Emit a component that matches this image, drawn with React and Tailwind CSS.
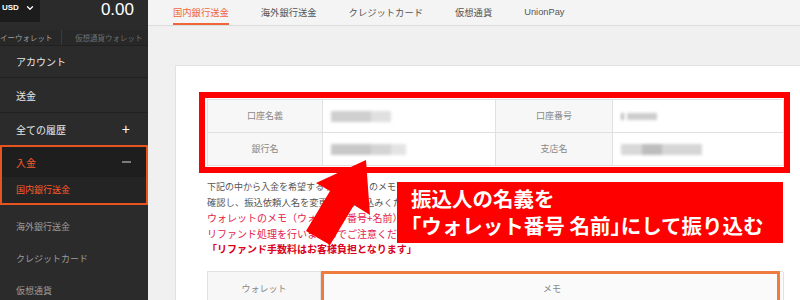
import { ChevronDown } from "lucide-react";

const jp = "font-['Noto_Sans_CJK_JP',sans-serif]";

function Sidebar() {
  return (
    <aside className="w-[148px] shrink-0 bg-[#2b2b2b] text-[#e8e8e8]">
      <div className="flex h-[30px] items-start justify-between">
        <div className="flex h-[22px] w-[40px] items-center gap-[6px] bg-[#1c1c1c] pl-[2px] pb-[6px]">
          <span className="font-['Liberation_Sans',sans-serif] text-[8px] font-bold leading-none text-white">USD</span>
          <ChevronDown size={10} strokeWidth={3} className="text-white" />
        </div>
        <span className="pr-[14px] pt-[1px] font-['Liberation_Sans',sans-serif] text-[17px] leading-none text-white">0.00</span>
      </div>
      <div className="flex h-[16px] items-center border-b border-[#202020] bg-[#282828] text-[7.5px] leading-none">
        <div className="flex h-full w-[62px] items-center border-r border-[#3a3a3a] text-[#a0a0a0]">イーウォレット</div>
        <div className="pl-[13px] text-[#6f6f6f]">仮想通貨ウォレット</div>
      </div>
      <div className="flex h-[32px] items-center border-b border-[#212121] pl-4 text-[10px]">アカウント</div>
      <div className="flex h-[35px] items-center border-b border-[#212121] pl-4 text-[10px]">送金</div>
      <div className="flex h-[32px] items-center justify-between pl-4 pr-[18px] text-[10px]">
        <span>全ての履歴</span>
        <span className="font-['Liberation_Sans',sans-serif] text-[14px] leading-none text-white">+</span>
      </div>
      <div className="h-[60px] border-2 border-[#e8541f]">
        <div className="flex h-[30px] items-center justify-between bg-[#1e1e1e] pl-[14px] pr-[15px] text-[10px] text-[#ff5a2c]">
          <span>入金</span>
          <span className="h-[1.5px] w-[9px] bg-[#7a7a7a]" />
        </div>
        <div className="flex h-[26px] items-center bg-[#242424] pl-[14px] text-[9px] text-[#ff5a2c]">国内銀行送金</div>
      </div>
      <div className="pt-[6px] text-[9px] text-[#9c9c9c]">
        <div className="flex h-[32px] items-center pl-4">海外銀行送金</div>
        <div className="flex h-[32px] items-center pl-4">クレジットカード</div>
        <div className="flex h-[32px] items-center pl-4">仮想通貨</div>
      </div>
    </aside>
  );
}

function Blur({ parts }) {
  return (
    <div className="flex blur-[1.5px]">
      {parts.map(([w, h, c], i) => (
        <div key={i} style={{ width: w, height: h, background: c }} />
      ))}
    </div>
  );
}

function Label({ children }) {
  return (
    <div className="flex h-[33px] items-center justify-center border-r border-b border-[#e0e0e0] bg-[#f7f7f7] text-[9px] text-[#888]">
      {children}
    </div>
  );
}

function Value({ children }) {
  return (
    <div className="flex h-[33px] items-center border-r border-b border-[#e0e0e0] bg-white pl-[8px]">
      {children}
    </div>
  );
}

function Main() {
  const tabs = ["海外銀行送金", "クレジットカード", "仮想通貨", "UnionPay"];
  return (
    <main className="flex-1 bg-[#f0f0f0]">
      <div className="flex h-[26px] gap-8 border-b border-[#dcdcdc] bg-[#f4f4f4] pl-[25px] text-[9.3px] text-[#555]">
        <div className="relative flex items-center text-[#f0653a]">
          国内銀行送金
          <span className="absolute bottom-0 left-0 right-0 h-[2px] bg-[#f0653a]" />
        </div>
        {tabs.map((t) => (
          <div key={t} className={`flex items-center ${t === "UnionPay" ? "font-['Liberation_Sans',sans-serif]" : ""}`}>
            {t}
          </div>
        ))}
      </div>

      <div className="pl-[27px] pt-[39px]">
        <div className="relative h-[260px] w-[640px] border border-[#e2e2e2] bg-white pl-[31px] pt-[33px]">
          <div className="relative w-[576px]">
            <div className="grid grid-cols-[115px_173px_117px_171px] border-l border-t border-[#e0e0e0]">
              <Label>口座名義</Label>
              <Value>
                <Blur parts={[[40, 11, "#cfcfcf"], [20, 11, "#e0e0e0"]]} />
              </Value>
              <Label>口座番号</Label>
              <Value>
                <Blur parts={[[3, 7, "#bbbbbb"], [3, 7, "#ffffff"], [30, 7, "#cdcdcd"]]} />
              </Value>
              <Label>銀行名</Label>
              <Value>
                <Blur parts={[[40, 11, "#c8c8c8"], [20, 11, "#d4d4d4"], [15, 11, "#e4e4e4"]]} />
              </Value>
              <Label>支店名</Label>
              <Value>
                <Blur parts={[[21, 11, "#d8d8d8"], [20, 11, "#bdbdbd"], [40, 11, "#d6d6d6"]]} />
              </Value>
            </div>
            <div className="pointer-events-none absolute -top-[7px] -right-[7px] -bottom-[7px] -left-[8px] border-[6px] border-[#ff0000]" />
          </div>

          <div className="mt-[13px] whitespace-nowrap leading-[15.5px]">
            <div className="text-[9px] text-[#555]">下記の中から入金を希望するウォレットのメモを</div>
            <div className="text-[9.3px] text-[#555]">確認し、振込依頼人名を変更の上お振込みください。</div>
            <div className="text-[10px] text-[#e5194c]">ウォレットのメモ（ウォレット番号+名前）と異なる場合、</div>
            <div className="text-[10px] text-[#e5194c]">リファンド処理を行いますのでご注意ください。</div>
            <div className="text-[10px] font-bold text-[#d8001a]">「リファンド手数料はお客様負担となります」</div>
          </div>

          <div className="relative mt-[14px] grid w-[576px] grid-cols-[113px_463px] border-l border-t border-[#e2e2e2]">
            <div className="flex h-[36px] items-center justify-center border-r border-b border-[#e2e2e2] bg-[#f7f7f7] text-[9px] text-[#888]">
              ウォレット
            </div>
            <div className="relative flex h-[36px] items-center justify-center border-r border-b border-[#e2e2e2] bg-[#fafafa] text-[9px] text-[#888]">
              メモ
              <div className="pointer-events-none absolute -top-px left-0 right-[3px] -bottom-[10px] border-[3px] border-[#ef7b3e]" />
            </div>
          </div>

          <svg className="pointer-events-none absolute left-[124px] top-[89px]" width="80" height="100" viewBox="0 0 80 100">
            <polygon points="66,5 70,60 54,50 30,90 6,76 30,36 16,28" fill="#ff0000" />
          </svg>

          <div className="absolute left-[221px] top-[116px] h-[61px] w-[386px] bg-[#ff0000] pl-[14px] pt-[3px] text-[20.5px] font-bold leading-[27px] text-white whitespace-nowrap">
            <div>振込人の名義を</div>
            <div className="[font-feature-settings:'halt']">「ウォレット番号 名前」<span className="[font-feature-settings:normal]">にして振り込む</span></div>
          </div>
        </div>
      </div>
    </main>
  );
}

export default function App() {
  return (
    <div className={`flex h-[300px] w-[800px] overflow-hidden ${jp}`}>
      <Sidebar />
      <Main />
    </div>
  );
}
